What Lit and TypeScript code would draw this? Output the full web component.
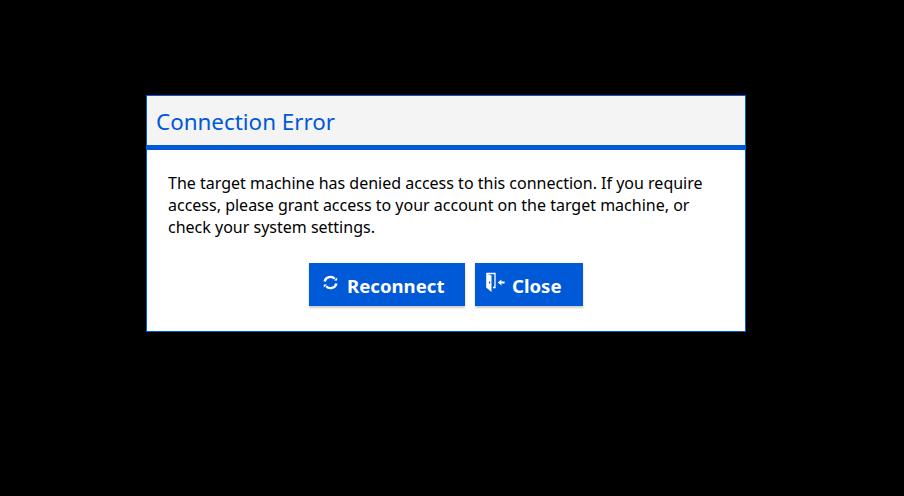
import { LitElement, css, html } from 'lit';
import { customElement } from 'lit/decorators.js';

@customElement('app-root')
export class AppRoot extends LitElement {
  static styles = css`
    :host {
      display: flex;
      justify-content: center;
      align-items: flex-start;
      box-sizing: border-box;
      height: 496px;
      padding: 95px 12px 0 0;
      background: #000;
      font-family: 'Noto Sans', 'Open Sans', sans-serif;
    }
    .dialog {
      box-sizing: border-box;
      width: 600px;
      height: 237px;
      background: #fff;
      border: 1px solid #0059d6;
    }
    .header {
      box-sizing: border-box;
      height: 54px;
      padding: 9px 0 0 9px;
      background: #f4f4f4;
      border-bottom: 5px solid #0059d6;
      color: #0059d6;
      font-size: 22.4px;
      line-height: 33px;
    }
    .message {
      margin: 0;
      padding: 22px 40px 0 21px;
      color: #000;
      font-size: 16px;
      line-height: 22px;
    }
    .actions {
      display: flex;
      justify-content: center;
      gap: 10px;
      margin-top: 25px;
    }
    button {
      display: flex;
      align-items: center;
      height: 43px;
      margin: 0;
      border: none;
      background: #0059d6;
      color: #fff;
      font: 700 18.6px/24px 'Noto Sans', 'Open Sans', sans-serif;
      box-shadow: 0 2px 2px rgba(0, 0, 0, 0.2);
    }
    .reconnect {
      width: 156px;
      padding: 2px 0 0 13px;
    }
    .close {
      width: 108px;
      padding: 2px 0 0 10px;
    }
    svg {
      flex: none;
      margin-top: -8px;
    }
    .reconnect svg {
      margin-top: -6px;
      margin-right: 8px;
    }
    .close svg {
      margin-right: 7px;
    }
  `;

  render() {
    return html`
      <div class="dialog">
        <div class="header">Connection Error</div>
        <p class="message">
          The target machine has denied access to this connection. If you require access, please
          grant access to your account on the target machine, or check your system settings.
        </p>
        <div class="actions">
          <button class="reconnect">
            <svg width="17" height="17" viewBox="0 0 17 17" fill="none" stroke="#fff" stroke-width="2.4">
              <path d="M2.6 7.5A6 6 0 0 1 12.8 4.8" />
              <path d="M14.4 9.5A6 6 0 0 1 4.2 12.2" />
              <path d="M12 6.6h3.2V3.4z" fill="#fff" stroke="none" />
              <path d="M5 10.4H1.8v3.2z" fill="#fff" stroke="none" />
            </svg>
            Reconnect
          </button>
          <button class="close">
            <svg width="20" height="20" viewBox="0 0 20 20" fill="none">
              <path d="M1.5 1.5h8.5v14H8" stroke="#fff" stroke-width="1.3" />
              <path d="M1.2 1.2l5.3 2.4V20l-5.3-4.5z" fill="#fff" />
              <path d="M4.6 9.5v2" stroke="#0059d6" stroke-width="1.3" />
              <path d="M12.8 10.5l3.6-3v2h3.2v2h-3.2v2z" fill="#fff" />
            </svg>
            Close
          </button>
        </div>
      </div>
    `;
  }
}
